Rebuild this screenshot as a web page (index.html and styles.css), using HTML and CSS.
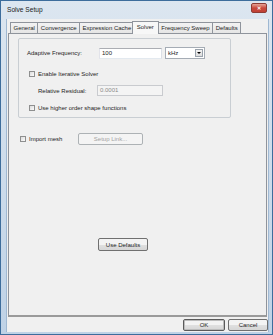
FILE: index.html
```html
<!DOCTYPE html>
<html lang="en">

<head>
    <meta charset="UTF-8">
    <title>Solve Setup</title>
    <link rel="stylesheet" href="styles.css">
</head>

<body>
    <div class="window">
        <div class="titlebar">
            <span class="title">Solve Setup</span>
            <span class="close">&#x2715;</span>
        </div>

        <div class="client">
            <div class="tabs">
                <div class="tab">General</div>
                <div class="tab">Convergence</div>
                <div class="tab">Expression Cache</div>
                <div class="tab active">Solver</div>
                <div class="tab">Frequency Sweep</div>
                <div class="tab">Defaults</div>
            </div>

            <div class="page">
                <div class="group">
                    <div class="row freq-row">
                        <span class="label freq-label">Adaptive Frequency:</span>
                        <div class="textbox freq-input">100</div>
                        <div class="combo">
                            <span class="combo-text">kHz</span>
                            <span class="combo-btn"><span class="arrow"></span></span>
                        </div>
                    </div>

                    <div class="row check-row iter-row">
                        <span class="checkbox"></span>
                        <span class="label">Enable Iterative Solver</span>
                    </div>

                    <div class="row resid-row">
                        <span class="label resid-label">Relative Residual:</span>
                        <div class="textbox disabled resid-input">0.0001</div>
                    </div>

                    <div class="row check-row order-row">
                        <span class="checkbox"></span>
                        <span class="label">Use higher order shape functions</span>
                    </div>
                </div>

                <div class="row import-row">
                    <span class="checkbox"></span>
                    <span class="label import-label">Import mesh</span>
                    <div class="button disabled setup-btn">Setup Link...</div>
                </div>

                <div class="button defaults-btn">Use Defaults</div>
            </div>

            <div class="actions">
                <div class="button default ok-btn">OK</div>
                <div class="button cancel-btn">Cancel</div>
            </div>
        </div>
    </div>
</body>

</html>
```

FILE: styles.css
```css
body {
    margin: 0;
    padding: 0;
    font-family: "Liberation Sans", Arial, sans-serif;
    font-size: 6px;
    color: #1e1e1e;
    background-color: #f0f0f0;
}

.window {
    width: 273px;
    height: 335px;
    box-sizing: border-box;
    border: 1px solid #3d6d9c;
    padding: 0 4px 2px 6px;
    background: linear-gradient(#dce6f0, #bfd2e6);
    display: flex;
    flex-direction: column;
}

.titlebar {
    height: 18px;
    display: flex;
    align-items: center;
    justify-content: space-between;
}

.title {
    font-size: 6.6px;
    color: #1a1a1a;
    margin-top: -2px;
}

.close {
    width: 16px;
    height: 10px;
    margin-top: -5px;
    margin-right: 1px;
    box-sizing: border-box;
    border: 1px solid #8d3b34;
    border-radius: 2px;
    background: linear-gradient(#e6a497, #c8493d 50%, #c04034);
    color: #fff;
    font-size: 5px;
    font-weight: bold;
    line-height: 8px;
    text-align: center;
}

.client {
    flex: 1;
    background-color: #f0f0f0;
    display: flex;
    flex-direction: column;
    box-shadow: -1px 0 0 #9fb8d2, 1px 0 0 #9fb8d2;
}

/* tab strip */
.tabs {
    height: 14px;
    display: flex;
    align-items: flex-end;
    padding-left: 3px;
}

.tab {
    height: 11px;
    box-sizing: border-box;
    padding: 0 2.5px;
    margin-right: -1px;
    border: 1px solid #8f949c;
    border-bottom: none;
    background: linear-gradient(#f3f3f3, #e5e5e5);
    line-height: 10px;
    white-space: nowrap;
}

.tab.active {
    height: 13px;
    padding: 0 4px;
    margin: 0 -1px 0 -2px;
    background: #f7f7f7;
    position: relative;
    top: 1px;
    line-height: 11px;
    z-index: 1;
}

.page {
    height: 284px;
    box-sizing: border-box;
    margin: 0 1px;
    border: 1px solid #8f949c;
    border-bottom: 2px solid #9a9a9a;
    padding: 4px 0 0 9px;
    display: flex;
    flex-direction: column;
    align-items: flex-start;
}

.group {
    width: 213px;
    height: 80px;
    box-sizing: border-box;
    border: 1px solid #c9ced3;
    border-radius: 2px;
    padding: 8px 0 0 8px;
    display: flex;
    flex-direction: column;
}

.row {
    display: flex;
    align-items: center;
}

.label {
    white-space: nowrap;
}

.freq-row {
    height: 12px;
}

.freq-label {
    width: 72px;
}

.textbox {
    height: 11px;
    box-sizing: border-box;
    border: 1px solid #abadb3;
    border-left-color: #e2e3ea;
    border-right-color: #dbdfe6;
    border-bottom-color: #e3e9ef;
    background: #fff;
    padding-left: 2px;
    line-height: 9px;
}

.freq-input {
    width: 63px;
}

.combo {
    width: 40px;
    height: 12px;
    margin-left: 3px;
    box-sizing: border-box;
    border: 1px solid #a5acb5;
    background: #fff;
    display: flex;
    align-items: center;
    justify-content: space-between;
}

.combo-text {
    padding-left: 2px;
}

.combo-btn {
    width: 8px;
    height: 8px;
    margin-right: 1px;
    border: 1px solid #9aa3ad;
    box-sizing: border-box;
    background: linear-gradient(#f4f4f4, #dcdcdc);
    display: flex;
    align-items: center;
    justify-content: center;
}

.arrow {
    width: 0;
    height: 0;
    border-left: 2px solid transparent;
    border-right: 2px solid transparent;
    border-top: 2px solid #000;
}

.check-row {
    height: 8px;
    padding-left: 2px;
}

.checkbox {
    width: 6px;
    height: 6px;
    box-sizing: border-box;
    border: 1px solid #8e8f8f;
    background: linear-gradient(135deg, #dcdcdc, #fbfbfb);
    margin-right: 3px;
    flex-shrink: 0;
}

.iter-row {
    margin-top: 11px;
}

.resid-row {
    height: 11px;
    margin-top: 7px;
    padding-left: 11px;
}

.resid-label {
    width: 59px;
}

.resid-input {
    width: 66px;
}

.textbox.disabled {
    background: #f4f4f4;
    border-color: #c9cbcf;
    color: #8a8a8a;
}

.order-row {
    margin-top: 8px;
}

.button {
    height: 12px;
    box-sizing: border-box;
    border: 1px solid #707070;
    border-radius: 2px;
    background: linear-gradient(#f3f3f3 50%, #e0e0e0 50%, #d6d6d6);
    display: flex;
    align-items: center;
    justify-content: center;
    white-space: nowrap;
}

.button.disabled {
    border-color: #adb2b5;
    background: #f4f4f4;
    color: #a3a3a3;
}

.import-row {
    margin-top: 15px;
    margin-left: 2px;
    height: 12px;
}

.import-label {
    width: 49px;
}

.setup-btn {
    width: 65px;
}

.defaults-btn {
    width: 50px;
    height: 13px;
    margin-top: 93px;
    margin-left: 80px;
}

.actions {
    margin-top: 2px;
    display: flex;
    justify-content: flex-end;
    gap: 3px;
    padding-right: 0;
}

.ok-btn {
    width: 42px;
    border-color: #5a5a5a;
    box-shadow: inset 0 0 0 1px #bcbcbc;
}

.cancel-btn {
    width: 40px;
}
```
